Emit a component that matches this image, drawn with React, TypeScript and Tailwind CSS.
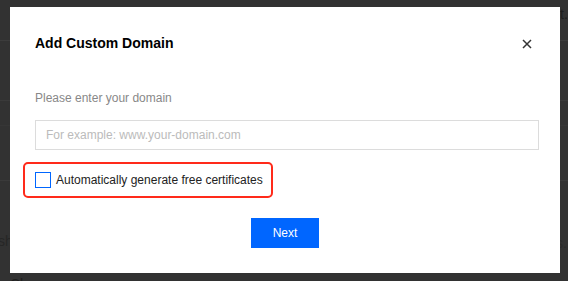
const App = () => {
  return (
    <div className="relative w-[568px] h-[281px] overflow-hidden bg-[#323232] font-['Liberation_Sans',Arial,sans-serif]">
      {/* page behind the overlay */}
      <div className="absolute inset-x-0 top-[40px] h-px bg-[#3c3c3c]" />
      <div className="absolute inset-x-0 top-[100px] h-px bg-[#3a3a3a]" />
      <div className="absolute inset-x-0 top-[125px] h-px bg-[#363636]" />
      <div className="absolute inset-x-0 top-[180px] h-px bg-[#3a3a3a]" />
      <span className="absolute left-[560px] top-[4px] text-[14px] text-[#1e1e1e]">t.</span>
      <span className="absolute left-[556px] top-[233px] text-[14px] text-[#2a2a2a]">s.</span>
      <span className="absolute left-[-2px] top-[231px] text-[14px] text-[#262626]">sh</span>
      <span className="absolute left-[10px] top-[274px] text-[14px] text-[#1e1e1e]">Cl</span>

      <div className="pl-[10px] pt-[7px]">
        <div className="relative flex w-[550px] h-[266px] flex-col bg-white pl-[25px] pr-[21px] pt-[26px]">
          <div className="flex items-center justify-between">
            <h2 className="text-[14px] leading-[20px] font-bold text-black">Add Custom Domain</h2>
            <button className="mr-[7px] mt-[2px] text-[#333]" aria-label="Close">
              <svg width="10" height="10" viewBox="0 0 10 10" fill="none">
                <path d="M1 1L9 9M9 1L1 9" stroke="currentColor" strokeWidth="1.5" />
              </svg>
            </button>
          </div>

          <label className="mt-[36px] text-[12px] leading-[18px] text-[#888]">Please enter your domain</label>
          <input
            type="text"
            placeholder="For example: www.your-domain.com"
            className="mt-[13px] h-[30px] w-[504px] border border-[#dcdcdc] px-[10px] text-[12px] text-[#333] placeholder:text-[#bbb] outline-none"
          />

          <div className="mt-[12px] -ml-[12px] flex h-[36px] w-[250px] items-center gap-[5px] rounded-[5px] border-2 border-[#ff2a1a] pl-[10px]">
            <span className="h-[16px] w-[16px] border border-[#0066ff] bg-white" />
            <span className="text-[12px] text-[#222]">Automatically generate free certificates</span>
          </div>

          <div className="mt-[20px] flex justify-center pr-[4px]">
            <button className="h-[30px] w-[68px] bg-[#0066ff] text-[12px] text-white">Next</button>
          </div>
        </div>
      </div>
    </div>
  );
};

export default App;
